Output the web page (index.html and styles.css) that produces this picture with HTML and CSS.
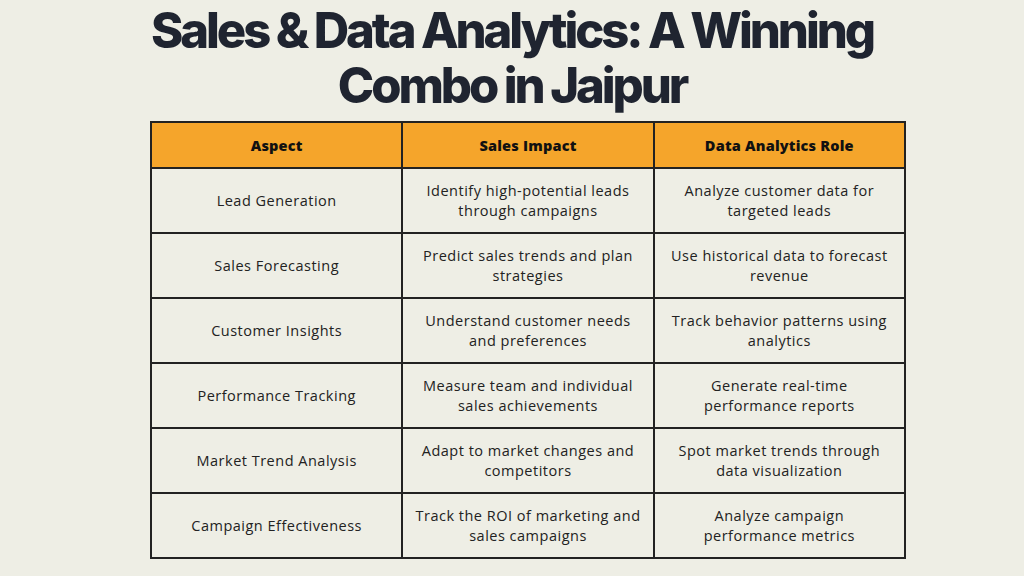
FILE: index.html
```html
<!DOCTYPE html>
<html>
<head>
<meta charset="utf-8">
<link rel="stylesheet" href="styles.css">
</head>
<body>
<div class="page">
  <h1 class="title">Sales &amp; Data Analytics: A Winning<br>Combo in Jaipur</h1>
  <table class="grid">
    <thead>
      <tr><th>Aspect</th><th>Sales Impact</th><th>Data Analytics Role</th></tr>
    </thead>
    <tbody>
      <tr><td>Lead Generation</td><td>Identify high-potential leads<br>through campaigns</td><td>Analyze customer data for<br>targeted leads</td></tr>
      <tr><td>Sales Forecasting</td><td>Predict sales trends and plan<br>strategies</td><td>Use historical data to forecast<br>revenue</td></tr>
      <tr><td>Customer Insights</td><td>Understand customer needs<br>and preferences</td><td>Track behavior patterns using<br>analytics</td></tr>
      <tr><td>Performance Tracking</td><td>Measure team and individual<br>sales achievements</td><td>Generate real-time<br>performance reports</td></tr>
      <tr><td>Market Trend Analysis</td><td>Adapt to market changes and<br>competitors</td><td>Spot market trends through<br>data visualization</td></tr>
      <tr><td>Campaign Effectiveness</td><td>Track the ROI of marketing and<br>sales campaigns</td><td>Analyze campaign<br>performance metrics</td></tr>
    </tbody>
  </table>
</div>
</body>
</html>
```
FILE: styles.css
```css
html, body {
  margin: 0;
  padding: 0;
  background: #eeeee5;
}
.page {
  width: 1024px;
  height: 576px;
  overflow: hidden;
  padding-top: 3px;
  box-sizing: border-box;
}
.title {
  margin: 0;
  text-align: center;
  font-family: Inter, "Liberation Sans", sans-serif;
  font-weight: 800;
  font-size: 49px;
  line-height: 55px;
  letter-spacing: -3.1px;
  color: #1f2430;
}
.grid {
  margin: 8px 0 0 150px;
  width: 756px;
  border-collapse: collapse;
  table-layout: fixed;
  font-family: "Open Sans", "Liberation Sans", sans-serif;
  color: #222;
}
.grid th, .grid td {
  border: 2px solid #222;
  text-align: center;
  vertical-align: middle;
  padding: 0 4px;
}
.grid th {
  background: #f5a52b;
  height: 44px;
  font-size: 14.5px;
  font-weight: 800;
  letter-spacing: 0.2px;
  color: #111;
}
.grid td {
  height: 63px;
  font-size: 14.5px;
  line-height: 20px;
  font-weight: 400;
  letter-spacing: 0.5px;
}
```
